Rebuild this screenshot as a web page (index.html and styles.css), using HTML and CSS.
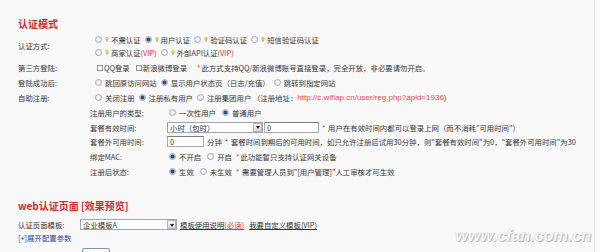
FILE: index.html
```html
<!DOCTYPE html>
<html lang="zh-CN">
<head>
<meta charset="utf-8">
<title>认证模式</title>
<link rel="stylesheet" href="styles.css">
</head>
<body>
<div class="page">
  <h2 class="sec-title">认证模式</h2>
  <div class="form">
    <div class="row row-auth">
      <div class="label">认证方式:</div>
      <div class="opts-block">
        <div class="line">
          <span class="opt"><span class="radio"></span><svg class="bulb" viewBox="0 0 4 5"><circle cx="2" cy="1.8" r="1.5" fill="#f4d43c" stroke="#c8a21a" stroke-width="0.4"/><rect x="1.4" y="3.3" width="1.2" height="1.3" fill="#8f8a66"/></svg>不需认证</span>
          <span class="opt"><span class="radio on"></span><svg class="bulb" viewBox="0 0 4 5"><circle cx="2" cy="1.8" r="1.5" fill="#f4d43c" stroke="#c8a21a" stroke-width="0.4"/><rect x="1.4" y="3.3" width="1.2" height="1.3" fill="#8f8a66"/></svg>用户认证</span>
          <span class="opt"><span class="radio"></span><svg class="bulb" viewBox="0 0 4 5"><circle cx="2" cy="1.8" r="1.5" fill="#f4d43c" stroke="#c8a21a" stroke-width="0.4"/><rect x="1.4" y="3.3" width="1.2" height="1.3" fill="#8f8a66"/></svg>验证码认证</span>
          <span class="opt"><span class="radio"></span><svg class="bulb" viewBox="0 0 4 5"><circle cx="2" cy="1.8" r="1.5" fill="#f4d43c" stroke="#c8a21a" stroke-width="0.4"/><rect x="1.4" y="3.3" width="1.2" height="1.3" fill="#8f8a66"/></svg>短信验证码认证</span>
        </div>
        <div class="line">
          <span class="opt"><span class="radio"></span><svg class="bulb" viewBox="0 0 4 5"><circle cx="2" cy="1.8" r="1.5" fill="#f4d43c" stroke="#c8a21a" stroke-width="0.4"/><rect x="1.4" y="3.3" width="1.2" height="1.3" fill="#8f8a66"/></svg>商家认证 <em class="red">(VIP)</em></span>
          <span class="opt"><span class="radio"></span><svg class="bulb" viewBox="0 0 4 5"><circle cx="2" cy="1.8" r="1.5" fill="#f4d43c" stroke="#c8a21a" stroke-width="0.4"/><rect x="1.4" y="3.3" width="1.2" height="1.3" fill="#8f8a66"/></svg>外部API认证<em class="red">(VIP)</em></span>
        </div>
      </div>
    </div>

    <div class="row">
      <div class="label">第三方登陆:</div>
      <span class="opt"><span class="check"></span>QQ登录</span>
      <span class="opt"><span class="check"></span>新浪微博登录</span>
      <span class="note note-gap"><b class="star">*</b>此方式支持QQ/新浪微博账号直接登录，完全开放，非必要请勿开启。</span>
    </div>

    <div class="row">
      <div class="label">登陆成功后:</div>
      <span class="opt"><span class="radio"></span>跳回原访问网站</span>
      <span class="opt"><span class="radio on"></span>显示用户状态页（日志/充值）</span>
      <span class="opt"><span class="radio"></span>跳转到指定网站</span>
    </div>

    <div class="row">
      <div class="label">自助注册:</div>
      <span class="opt"><span class="radio"></span>关闭注册</span>
      <span class="opt"><span class="radio on"></span>注册私有用户</span>
      <span class="opt"><span class="radio"></span>注册集团用户 （注册地址：<span class="url">http://c.wifiap.cn/user/reg.php?apid=1936</span>）</span>
    </div>

    <div class="row sub">
      <div class="label">注册用户的类型:</div>
      <span class="opt"><span class="radio"></span>一次性用户</span>
      <span class="opt"><span class="radio on"></span>普通用户</span>
    </div>

    <div class="row sub">
      <div class="label">套餐有效时间:</div>
      <span class="select select-unit"><span class="sel-text">小时（包时）</span><span class="sel-arrow"></span></span>
      <span class="input input-wide">0</span>
      <span class="note"><b class="star">*</b> 用户在有效时间内都可以登录上网（而不消耗"可用时间"）</span>
    </div>

    <div class="row sub">
      <div class="label">套餐外可用时间:</div>
      <span class="input input-short">0</span>
      <span class="unit">分钟</span>
      <span class="note"><b class="star">*</b> 套餐时间到期后的可用时间，如只允许注册后试用30分钟，则"套餐有效时间"为0，"套餐外可用时间"为30</span>
    </div>

    <div class="row sub">
      <div class="label">绑定MAC:</div>
      <span class="opt"><span class="radio on"></span>不开启</span>
      <span class="opt"><span class="radio"></span>开启</span>
      <span class="note note-tight"><b class="star">*</b>此功能暂只支持认证网关设备</span>
    </div>

    <div class="row sub">
      <div class="label">注册后状态:</div>
      <span class="opt"><span class="radio on"></span>生效</span>
      <span class="opt"><span class="radio"></span>未生效</span>
      <span class="note note-tight"><b class="star">*</b> 需要管理人员到"[用户管理]"人工审核才可生效</span>
    </div>
  </div>

  <h2 class="sec-title sec-title-web">web认证页面 [效果预览]</h2>
  <div class="row row-tpl">
    <div class="label label-tpl">认证页面模板:</div>
    <span class="select select-tpl"><span class="sel-text">企业模板A</span><span class="sel-arrow"></span></span>
    <span class="link link-first">模板使用说明</span><span class="link red">(必读)</span>
    <span class="link link-gap">我要自定义模板(VIP)</span>
  </div>
  <div class="row row-expand">
    <span class="expand">[+]展开配置参数</span>
  </div>
  <div class="row-btn">
    <span class="btn">保存</span>
  </div>

  <div class="watermark">www.cfan.com.cn</div>
</div>
</body>
</html>
```

FILE: styles.css
```css
* { box-sizing: border-box; }
html, body { margin: 0; padding: 0; }
body {
  width: 600px;
  height: 252px;
  overflow: hidden;
  background: #fbfbfb;
  font-family: "Noto Sans CJK SC", "Liberation Sans", sans-serif;
  font-size: 7.4px;
  color: #363636;
}
.page {
  position: relative;
  width: 595px;
  height: 252px;
  background: #f9f9f9;
  border-right: 1px solid #e0e0e0;
  padding: 17px 0 0 18px;
}
.sec-title {
  margin: 0;
  height: 14px;
  line-height: 14px;
  font-size: 10px;
  font-weight: bold;
  color: #cf2b2b;
}
.sec-title-web { margin-top: 20px; }

.row {
  display: flex;
  align-items: center;
  height: 14.8px;
  white-space: nowrap;
}
.row-auth { height: 29.5px; padding: 1.5px 0 2px; }
.label { flex: none; width: 77px; }
.sub { padding-left: 72px; }

.opts-block { display: flex; flex-direction: column; }
.line { display: flex; align-items: center; height: 13px; }

.opt { display: inline-flex; align-items: center; margin-right: 4px; }

.radio {
  flex: none;
  width: 7px;
  height: 7px;
  border-radius: 50%;
  border: 1px solid #a4abb4;
  background: radial-gradient(circle, #ffffff 0, #e2e2e2 100%);
  margin-right: 3px;
}
.sub .radio { margin-left: 2px; }
.radio.on {
  background: radial-gradient(circle, #2c4d84 0, #2c4d84 1.4px, #9db2cf 2.2px, #f4f6f9 3px);
}
.bulb { flex: none; width: 4px; height: 5px; margin-right: 2px; }

.check {
  flex: none;
  width: 6px;
  height: 6px;
  border: 1px solid #8f949c;
  background: linear-gradient(#f2f2f2, #ffffff);
  margin: 0 1px 0 2px;
}

.red { color: #e0302f; font-style: normal; }
.star { color: #e62020; font-weight: normal; margin-right: 1px; }
.note { margin-left: 3px; }
.note-gap { margin-left: 6px; }
.note-tight { margin-left: 0; }
.url { color: #e04a4a; font-family: "Liberation Sans", sans-serif; font-size: 8px; }
.unit { margin-left: 3px; }

.select {
  display: inline-flex;
  align-items: center;
  height: 11px;
  border: 1px solid #98a6b5;
  background: #fff;
  padding-left: 2px;
}
.select-unit { width: 96px; }
.select-tpl { width: 97px; }
.sel-text { flex: 1; line-height: 9px; }
.sel-arrow {
  position: relative;
  flex: none;
  width: 9px;
  height: 9px;
  border: 1px solid #b5b5b5;
  background: linear-gradient(#f7f7f7, #d9d9d9);
}
.sel-arrow::after {
  content: "";
  position: absolute;
  left: 1.5px;
  top: 2.5px;
  border-left: 2.5px solid transparent;
  border-right: 2.5px solid transparent;
  border-top: 3px solid #222;
}

.input {
  display: inline-block;
  height: 11px;
  line-height: 9px;
  border: 1px solid #a8a8a8;
  border-top-color: #7d7d7d;
  background: #fff;
  padding-left: 2px;
}
.input-wide { width: 55px; margin-left: 1px; }
.input-short { width: 37px; }

.row-tpl { height: 15px; margin-top: 4.5px; }
.label-tpl { width: 62px; }
.link { text-decoration: underline; }
.link-first { margin-left: 3px; }
.link-gap { margin-left: 5px; }

.row-expand { height: 11px; }
.expand { color: #2446a8; }

.row-btn { margin-top: 4.5px; padding-left: 64px; }
.btn {
  display: inline-block;
  width: 28px;
  height: 13px;
  line-height: 11px;
  text-align: center;
  border: 1px solid #7f93b1;
  border-radius: 2px;
  background: linear-gradient(#ffffff, #e2e8f1);
}

.watermark {
  position: absolute;
  right: 3px;
  top: 226px;
  font-family: "Liberation Sans", sans-serif;
  font-style: italic;
  font-weight: bold;
  font-size: 16.5px;
  letter-spacing: -0.2px;
  color: #f4f4f4;
  text-shadow: 1px 1px 0 #bdbdbd, -0.5px -0.5px 0 #d4d4d4;
}
```
